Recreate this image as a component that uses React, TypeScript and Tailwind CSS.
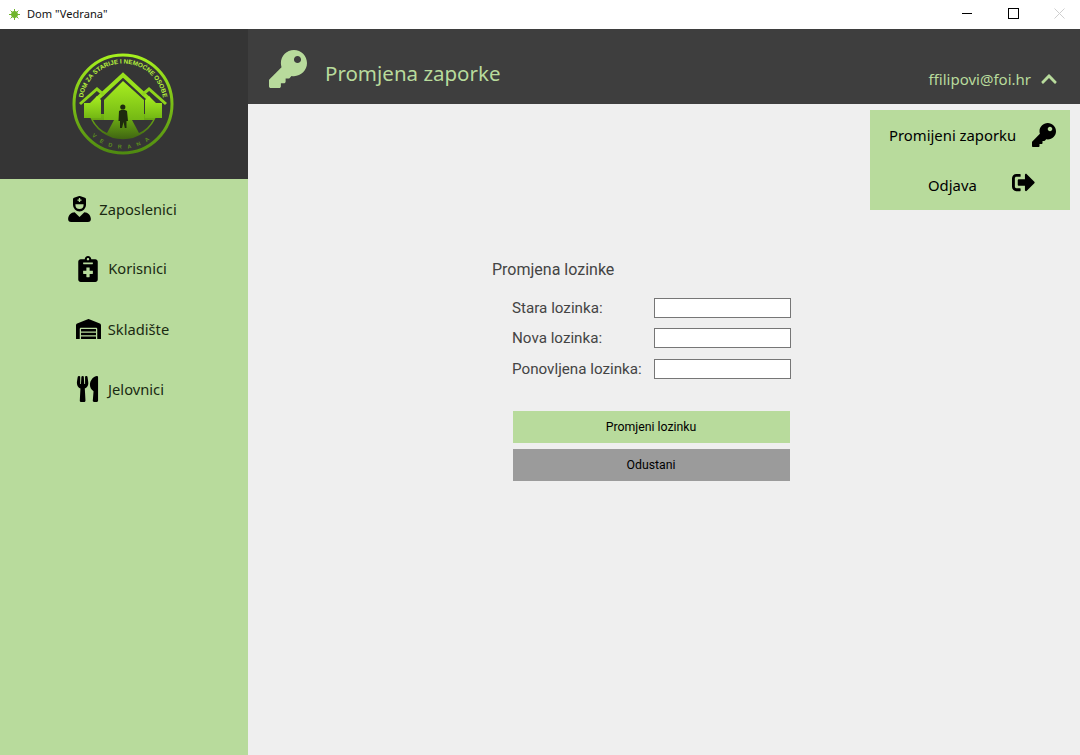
import { FaKey, FaUserNurse, FaNotesMedical, FaWarehouse, FaUtensils, FaSignOutAlt, FaChevronUp } from "react-icons/fa";

const seg = "font-['Noto_Sans','Open_Sans',sans-serif]";
const rob = "font-['Roboto',sans-serif]";

function Logo() {
  return (
    <svg width="104" height="104" viewBox="0 0 104 104">
      <defs>
        <linearGradient id="ring" x1="0" y1="0" x2="0" y2="1">
          <stop offset="0" stopColor="#a6f01e" />
          <stop offset="1" stopColor="#4f8a10" />
        </linearGradient>
        <linearGradient id="house" x1="0" y1="0" x2="0" y2="1">
          <stop offset="0" stopColor="#a8ee20" />
          <stop offset="1" stopColor="#74b814" />
        </linearGradient>
        <linearGradient id="road" x1="0" y1="0" x2="0" y2="1">
          <stop offset="0" stopColor="#74b814" />
          <stop offset="1" stopColor="#3f6412" />
        </linearGradient>
        <path id="topArc" d="M10.5 52 A40.5 40.5 0 0 1 91.5 52" />
        <path id="botArc" d="M8 62 A44 44 0 0 0 94 62" />
      </defs>
      <circle cx="51" cy="52" r="49" fill="none" stroke="url(#ring)" strokeWidth="3" />
      <path d="M17 62 A35.5 35.5 0 0 0 85 62 Z" fill="url(#road)" />
      <path d="M21 68 L42 68 L35 81 Q26 77 21 68 Z" fill="#353535" />
      <path d="M81 68 L60 68 L67 81 Q76 77 81 68 Z" fill="#353535" />
      <text fontSize="6.3" fontWeight="700" fill="#b6f03c" fontFamily="Liberation Sans, sans-serif">
        <textPath href="#topArc" startOffset="50%" textAnchor="middle">DOM ZA STARIJE I NEMOĆNE OSOBE</textPath>
      </text>
      <text fontSize="5.5" fontWeight="700" fill="#5c8f1c" letterSpacing="6" fontFamily="Liberation Sans, sans-serif">
        <textPath href="#botArc" startOffset="50%" textAnchor="middle">VEDRANA</textPath>
      </text>
      <path d="M25 47 L51 23 L77 47" fill="none" stroke="#98e01c" strokeWidth="4" />
      <path d="M51 29 L72 48 L72 68 L32 68 L32 48 Z" fill="url(#house)" />
      <path d="M8 52 L25 37 L32 43" fill="none" stroke="#8fd41b" strokeWidth="3" />
      <path d="M94 52 L77 37 L70 43" fill="none" stroke="#8fd41b" strokeWidth="3" />
      <path d="M12 51 L18 51 L25 44 L29 48 L29 66 L12 66 Z" fill="url(#house)" />
      <path d="M90 51 L84 51 L77 44 L73 48 L73 66 L90 66 Z" fill="url(#house)" />
      <circle cx="50.8" cy="55" r="2.6" fill="#1e2a0e" />
      <path d="M47 59 Q51 56.5 55 59 L56 69 L54.5 69 L54.5 76 L52.8 76 L51.5 70 L50 76 L48 76 L48 69 L46.5 69 Z" fill="#1e2a0e" />
    </svg>
  );
}

function NavItem({ icon, label, cls }: { icon: React.ReactNode; label: string; cls: string }) {
  return (
    <div className={`h-[60px] flex items-center justify-center ${cls}`}>
      {icon}
      <span className={`${seg} text-[14.7px] text-[#1a2a12]`}>{label}</span>
    </div>
  );
}

function Field({ label }: { label: string }) {
  return (
    <div className="flex items-center justify-between h-[20px] w-[279px]">
      <span className={`${rob} text-[15.2px] pt-[1px] text-[#444444]`}>{label}</span>
      <input className="w-[137px] h-[20px] bg-white border border-[#767676]" />
    </div>
  );
}

export default function App() {
  return (
    <div className="relative w-[1080px] h-[755px] overflow-hidden flex flex-col bg-[#efefef]">
      <div className="h-[29px] bg-white flex items-center shrink-0">
        <svg className="ml-[9px]" width="11" height="11" viewBox="0 0 11 11">
          <circle cx="5.5" cy="5.5" r="3.4" fill="#6fb52c" />
          <path d="M5.5 0v11M0 5.5h11M1.6 1.6l7.8 7.8M9.4 1.6l-7.8 7.8" stroke="#6fb52c" strokeWidth="1" />
        </svg>
        <span className={`${seg} ml-[7px] text-[11.1px] text-[#111111]`}>Dom "Vedrana"</span>
        <div className="ml-auto -mr-[2px] pb-[3px] flex items-center">
          <div className="w-[46px] flex justify-center"><div className="w-[10px] h-px bg-black" /></div>
          <div className="w-[46px] flex justify-center"><div className="w-[11px] h-[11px] border border-black" /></div>
          <div className="w-[46px] flex justify-center">
            <svg width="11" height="11" viewBox="0 0 11 11"><path d="M0.5 0.5l10 10M10.5 0.5l-10 10" stroke="#cfcfcf" strokeWidth="1" /></svg>
          </div>
        </div>
      </div>
      <div className="flex flex-1 min-h-0">
        <aside className="w-[248px] bg-[#b8db9c] shrink-0 flex flex-col">
          <div className="h-[150px] bg-[#353535] flex items-center justify-center">
            <Logo />
          </div>
          <NavItem cls="gap-[8px] pr-[3px]" icon={<FaUserNurse className="text-black text-[26px] w-[23px]" />} label="Zaposlenici" />
          <NavItem cls="gap-[10px] pr-[3px] pb-[1px]" icon={<FaNotesMedical className="text-black text-[26px] w-[20px]" />} label="Korisnici" />
          <NavItem cls="gap-[7px] pr-[3px]" icon={<FaWarehouse className="text-black text-[20px] w-[25px]" />} label="Skladište" />
          <NavItem cls="gap-[9px] pr-[8px]" icon={<FaUtensils className="text-black text-[26px] w-[23px]" />} label="Jelovnici" />
        </aside>
        <div className="flex-1 flex flex-col">
          <header className="h-[75px] bg-[#3e3e3e] flex items-center pl-[21px] shrink-0">
            <FaKey className="text-[#b8db9c] text-[38px] mt-[5px]" />
            <span className={`${seg} ml-[18px] mt-[14px] text-[20.5px] text-[#b8db9c]`}>Promjena zaporke</span>
            <div className="ml-auto flex items-center self-end mb-[14px] pr-[22px]">
              <span className={`${seg} text-[15px] text-[#b8db9c]`}>ffilipovi@foi.hr</span>
              <FaChevronUp className="ml-[9px] text-[#b8db9c] text-[18px]" />
            </div>
          </header>
          <main className="flex-1 pl-[244px] pt-[156px]">
            <h1 className={`${rob} text-[16px] leading-[20px] text-[#444444]`}>Promjena lozinke</h1>
            <div className="ml-[20px] mt-[18px] flex flex-col">
              <Field label="Stara lozinka:" />
              <div className="mt-[10px]"><Field label="Nova lozinka:" /></div>
              <div className="mt-[11px]"><Field label="Ponovljena lozinka:" /></div>
            </div>
            <div className="ml-[21px] mt-[32px] flex flex-col gap-[6px] w-[277px]">
              <div className={`${rob} h-[32px] bg-[#b8db9c] flex items-center justify-center pr-[1px] text-[12.3px] text-black`}>Promjeni lozinku</div>
              <div className={`${rob} h-[32px] bg-[#9b9b9b] flex items-center justify-center pr-[1px] text-[12.3px] text-black`}>Odustani</div>
            </div>
          </main>
        </div>
      </div>
      <div className="absolute left-[870px] top-[110px] w-[200px] h-[100px] bg-[#b8db9c]">
        <div className="h-[50px] flex items-center pl-[19px]">
          <span className={`${seg} text-[14.85px] text-black`}>Promijeni zaporku</span>
          <FaKey className="ml-auto mr-[14px] text-black text-[24px]" />
        </div>
        <div className="h-[50px] flex items-center pl-[58px]">
          <span className={`${seg} text-[14.85px] text-black`}>Odjava</span>
          <FaSignOutAlt className="ml-[35px] mb-[5px] text-black text-[23px]" />
        </div>
      </div>
    </div>
  );
}
